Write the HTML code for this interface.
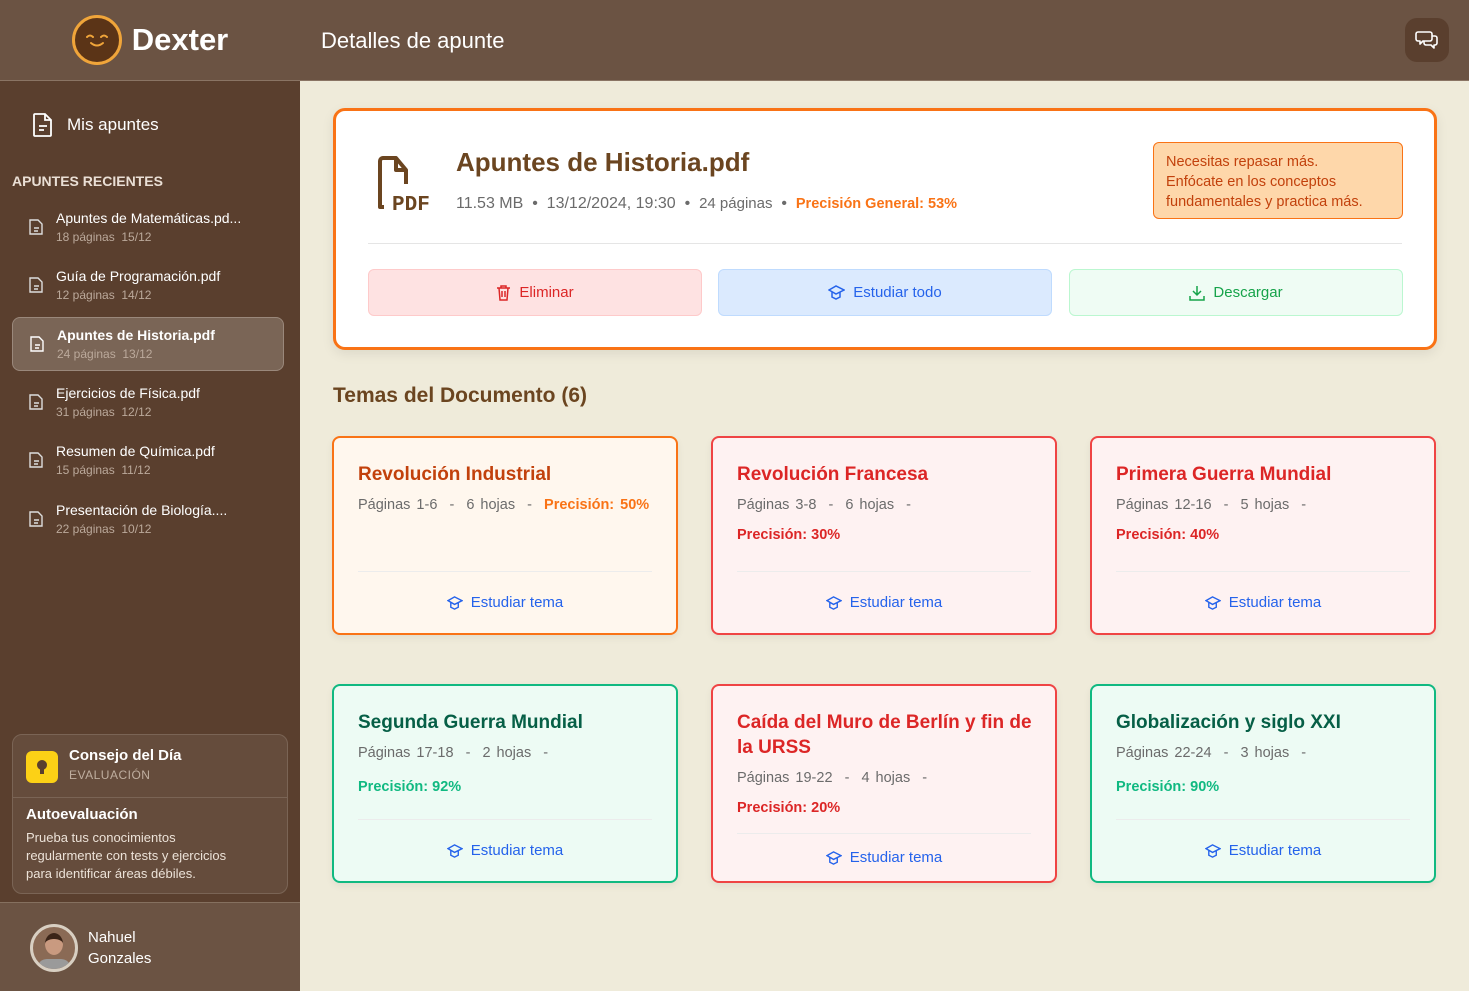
<!DOCTYPE html>
<html><head><meta charset="utf-8"><style>
*{box-sizing:border-box;margin:0;padding:0}
body{width:1469px;height:991px;overflow:hidden;font-family:"Liberation Sans",sans-serif;background:#efebda;position:relative}
.sb{position:absolute;left:0;top:0;width:300px;height:991px;background:#5a3f2e}
.logo{height:81px;background:#6b5343;border-bottom:1px solid #8a7464;display:flex;align-items:center;justify-content:center;gap:10px}
.face{width:50px;height:50px;border-radius:50%;background:#5b3417;border:3px solid #f0a53a;position:relative}
.logo span{color:#fff;font-weight:bold;font-size:31px}
.mis{position:absolute;left:32px;top:112px;color:#fff;font-size:17px;display:flex;align-items:center;gap:13px}
.rec{position:absolute;left:12px;top:173px;color:#eadfd5;font-weight:bold;font-size:14px}
.it{position:absolute;left:12px;width:272px;height:54px;border-radius:8px;display:flex;align-items:center;padding-left:17px;gap:13px;color:#fff}
.it.sel{background:#7a6556;border:1px solid #9a887b}
.it b{display:block;font-weight:normal;font-size:14px}
.it.sel b{font-weight:bold}
.it i{display:block;font-style:normal;font-size:12px;color:#bba99b;margin-top:4px}
.tip{position:absolute;left:12px;top:734px;width:276px;height:160px;border:1px solid #7a6455;border-radius:10px;background:#654c3c}
.bulb{position:absolute;left:13px;top:16px;width:32px;height:32px;border-radius:6px;background:#fcd116}
.user{position:absolute;left:0;top:902px;width:300px;height:89px;background:#6b5343;border-top:1px solid #85705f}
.hdr{position:absolute;left:300px;top:0;right:0;height:81px;background:#6b5343;border-bottom:1px solid #8a7464}
.hdr h1{position:absolute;left:21px;top:28px;font-weight:normal;font-size:22px;color:#fff}
.chat{position:absolute;right:20px;top:18px;width:44px;height:44px;border-radius:12px;background:#5a3f2e;display:flex;align-items:center;justify-content:center}
.main{position:absolute;left:333px;top:108px;width:1104px;height:242px;background:#fff;border:3px solid #f97316;border-radius:12px;box-shadow:0 4px 12px rgba(0,0,0,.08)}
.btn{position:absolute;top:158px;width:334px;height:47px;border-radius:6px;display:flex;align-items:center;justify-content:center;gap:8px;font-size:15px}
.card{position:absolute;width:346px;height:199px;border:2px solid;border-radius:8px;padding:24px 24px 0 24px;box-shadow:0 3px 8px rgba(0,0,0,.06)}
.card h3{font-size:19px;line-height:25px;margin-bottom:10px}
.card .m{font-size:14.5px;color:#6b6b6b;word-spacing:2px}
.card .p{font-weight:bold;font-size:14.5px}
.card .f{position:absolute;left:24px;right:24px;bottom:0;height:62px;border-top:1px solid #ececec;display:flex;align-items:center;justify-content:center;gap:8px;color:#2563eb;font-size:15px}
.o{border-color:#f97316;background:#fff7ee}.o h3{color:#c2410c}.o .p{color:#f97316}
.r{border-color:#ef4444;background:#fef2f2}.r h3{color:#dc2626}.r .p{color:#dc2626}
.g{border-color:#10b981;background:#edfbf4}.g h3{color:#065f46}.g .p{color:#10b981}
</style></head><body>
<div class="sb">
<div class="logo"><div class="face"><svg width="44" height="44" viewBox="0 0 44 44" fill="none" stroke="#f0a53a" stroke-width="2" stroke-linecap="round"><path d="M12 19q3-3 6 0M26 19q3-3 6 0M16 25q6 5 12 0"/></svg></div><span>Dexter</span></div>
<div class="mis"><svg width="22" height="26" viewBox="0 0 22 26" fill="none" stroke="#fff" stroke-width="1.8"><path d="M3 2h10l6 6v15a1 1 0 0 1-1 1H3a1 1 0 0 1-1-1V3a1 1 0 0 1 1-1zM13 2v6h6M7 18h5M7 14h8"/></svg>Mis apuntes</div>
<div class="rec">APUNTES RECIENTES</div>
<div class="it" style="top:200px"><svg width="14" height="17" viewBox="0 0 14 17" fill="none" stroke="#ddd" stroke-width="1.4"><path d="M2 1h7l4 4v10H1V1zM5 12h4M5 9h5"/></svg><div><b>Apuntes de Matemáticas.pd...</b><i>18 páginas &nbsp;15/12</i></div></div>
<div class="it" style="top:258px"><svg width="14" height="17" viewBox="0 0 14 17" fill="none" stroke="#ddd" stroke-width="1.4"><path d="M2 1h7l4 4v10H1V1zM5 12h4M5 9h5"/></svg><div><b>Guía de Programación.pdf</b><i>12 páginas &nbsp;14/12</i></div></div>
<div class="it sel" style="top:317px"><svg width="14" height="17" viewBox="0 0 14 17" fill="none" stroke="#fff" stroke-width="1.4"><path d="M2 1h7l4 4v10H1V1zM5 12h4M5 9h5"/></svg><div><b>Apuntes de Historia.pdf</b><i>24 páginas &nbsp;13/12</i></div></div>
<div class="it" style="top:375px"><svg width="14" height="17" viewBox="0 0 14 17" fill="none" stroke="#ddd" stroke-width="1.4"><path d="M2 1h7l4 4v10H1V1zM5 12h4M5 9h5"/></svg><div><b>Ejercicios de Física.pdf</b><i>31 páginas &nbsp;12/12</i></div></div>
<div class="it" style="top:433px"><svg width="14" height="17" viewBox="0 0 14 17" fill="none" stroke="#ddd" stroke-width="1.4"><path d="M2 1h7l4 4v10H1V1zM5 12h4M5 9h5"/></svg><div><b>Resumen de Química.pdf</b><i>15 páginas &nbsp;11/12</i></div></div>
<div class="it" style="top:492px"><svg width="14" height="17" viewBox="0 0 14 17" fill="none" stroke="#ddd" stroke-width="1.4"><path d="M2 1h7l4 4v10H1V1zM5 12h4M5 9h5"/></svg><div><b>Presentación de Biología....</b><i>22 páginas &nbsp;10/12</i></div></div>
<div class="tip"><div class="bulb"><svg width="32" height="32" viewBox="0 0 32 32"><circle cx="16" cy="14" r="5" fill="#5a3f2e"/><rect x="14" y="18" width="4" height="5" fill="#5a3f2e"/></svg></div>
<div style="position:absolute;left:56px;top:12px;color:#fff;font-weight:bold;font-size:15px">Consejo del Día</div>
<div style="position:absolute;left:56px;top:33px;color:#bfae9f;font-size:12px;letter-spacing:.5px">EVALUACIÓN</div>
<div style="position:absolute;left:0;right:0;top:62px;border-top:1px solid #7a6455"></div>
<div style="position:absolute;left:13px;top:71px;color:#fff;font-weight:bold;font-size:15px">Autoevaluación</div>
<div style="position:absolute;left:13px;top:94px;width:260px;color:#ece2d8;font-size:13px;line-height:18px;white-space:nowrap">Prueba tus conocimientos<br>regularmente con tests y ejercicios<br>para identificar áreas débiles.</div></div>
<div class="user"><div style="position:absolute;left:30px;top:21px;width:48px;height:48px;border-radius:50%;background:#8a6a55;border:3px solid #d8cfc2;overflow:hidden"><div style="position:absolute;left:12px;top:6px;width:18px;height:22px;border-radius:50%;background:#c99a80;border-top:6px solid #3a2418"></div><div style="position:absolute;left:4px;bottom:0;width:34px;height:10px;border-radius:10px 10px 0 0;background:#9a9a9a"></div></div>
<div style="position:absolute;left:88px;top:24px;color:#fff;font-size:15px;line-height:21px">Nahuel<br>Gonzales</div></div>
</div>
<div class="hdr"><h1>Detalles de apunte</h1><div class="chat"><svg width="24" height="22" viewBox="0 0 24 22" fill="none" stroke="#fff" stroke-width="1.6" stroke-linejoin="round"><path d="M3 3h12a2 2 0 0 1 2 2v5a2 2 0 0 1-2 2H8l-3 3v-3H3a2 2 0 0 1-2-2V5a2 2 0 0 1 2-2z"/><path d="M17 7h3a2 2 0 0 1 2 2v5a2 2 0 0 1-2 2h-1v3l-3-3h-5a2 2 0 0 1-2-2v-2"/></svg></div></div>
<div class="main">
<svg style="position:absolute;left:36px;top:44px" width="58" height="58" viewBox="0 0 58 58" fill="none" stroke="#6b4520" stroke-width="4" stroke-linejoin="round"><path d="M12 52H8V6a3 3 0 0 1 3-3h13l10 12v14M24 3v12h10"/><text x="20" y="55" fill="#6b4520" stroke="none" font-family="Liberation Mono" font-weight="bold" font-size="21">PDF</text></svg>
<div style="position:absolute;left:120px;top:36px;color:#6b4520;font-size:26px;font-weight:bold">Apuntes de Historia.pdf</div>
<div style="position:absolute;left:120px;top:84px;font-size:16px;color:#6b6b6b;white-space:nowrap">11.53 MB &nbsp;• &nbsp;13/12/2024, 19:30 &nbsp;• &nbsp;<span style="font-size:15px">24 páginas</span> &nbsp;• &nbsp;<b style="color:#f97316;font-size:14.5px">Precisión General: 53%</b></div>
<div style="position:absolute;left:817px;top:31px;width:250px;height:77px;background:#fed7aa;border:1px solid #f97316;border-radius:6px;padding:9px 12px;color:#c2410c;font-size:14.5px;line-height:20px">Necesitas repasar más.<br>Enfócate en los conceptos<br>fundamentales y practica más.</div>
<div style="position:absolute;left:32px;right:32px;top:132px;border-top:1px solid #e5e5e5"></div>
<div class="btn" style="left:32px;background:#fee2e2;border:1px solid #fecaca;color:#dc2626"><svg width="15" height="17" viewBox="0 0 15 17" fill="none" stroke="#dc2626" stroke-width="1.5"><path d="M1 4h13M5 4V2h5v2M3 4l1 12h7l1-12M6 7v6M9 7v6"/></svg>Eliminar</div>
<div class="btn" style="left:382px;background:#dbeafe;border:1px solid #bfdbfe;color:#2563eb"><svg width="17" height="15" viewBox="0 0 17 15" fill="none" stroke="#2563eb" stroke-width="1.5"><path d="M1 5l7-4 8 4-8 4zM4 7v5l4 2 4-2V7"/></svg>Estudiar todo</div>
<div class="btn" style="left:733px;background:#effcf4;border:1px solid #bbf7d0;color:#16a34a"><svg width="16" height="16" viewBox="0 0 16 16" fill="none" stroke="#16a34a" stroke-width="1.5"><path d="M8 1v9M4 6l4 4 4-4M1 11v4h14v-4"/></svg>Descargar</div>
</div>
<div style="position:absolute;left:333px;top:384px;font-size:21px;font-weight:bold;color:#6b4520">Temas del Documento (6)</div>

<div class="card o" style="left:332px;top:436px"><h3>Revolución Industrial</h3><div class="m">Páginas 1-6 &nbsp;- &nbsp;6 hojas &nbsp;- &nbsp;<span class="p">Precisión: 50%</span></div><div class="f"><svg width="16" height="14" viewBox="0 0 17 15" fill="none" stroke="#2563eb" stroke-width="1.5"><path d="M1 5l7-4 8 4-8 4zM4 7v5l4 2 4-2V7"/></svg>Estudiar tema</div></div>
<div class="card r" style="left:711px;top:436px"><h3>Revolución Francesa</h3><div class="m">Páginas 3-8 &nbsp;- &nbsp;6 hojas &nbsp;-</div><div class="p" style="margin-top:14px">Precisión: 30%</div><div class="f"><svg width="16" height="14" viewBox="0 0 17 15" fill="none" stroke="#2563eb" stroke-width="1.5"><path d="M1 5l7-4 8 4-8 4zM4 7v5l4 2 4-2V7"/></svg>Estudiar tema</div></div>
<div class="card r" style="left:1090px;top:436px"><h3>Primera Guerra Mundial</h3><div class="m">Páginas 12-16 &nbsp;- &nbsp;5 hojas &nbsp;-</div><div class="p" style="margin-top:14px">Precisión: 40%</div><div class="f"><svg width="16" height="14" viewBox="0 0 17 15" fill="none" stroke="#2563eb" stroke-width="1.5"><path d="M1 5l7-4 8 4-8 4zM4 7v5l4 2 4-2V7"/></svg>Estudiar tema</div></div>
<div class="card g" style="left:332px;top:684px"><h3>Segunda Guerra Mundial</h3><div class="m">Páginas 17-18 &nbsp;- &nbsp;2 hojas &nbsp;-</div><div class="p" style="margin-top:18px">Precisión: 92%</div><div class="f"><svg width="16" height="14" viewBox="0 0 17 15" fill="none" stroke="#2563eb" stroke-width="1.5"><path d="M1 5l7-4 8 4-8 4zM4 7v5l4 2 4-2V7"/></svg>Estudiar tema</div></div>
<div class="card r" style="left:711px;top:684px"><h3 style="white-space:nowrap">Caída del Muro de Berlín y fin de<br>la URSS</h3><div class="m">Páginas 19-22 &nbsp;- &nbsp;4 hojas &nbsp;-</div><div class="p" style="margin-top:14px">Precisión: 20%</div><div class="f" style="height:48px">
<svg width="16" height="14" viewBox="0 0 17 15" fill="none" stroke="#2563eb" stroke-width="1.5"><path d="M1 5l7-4 8 4-8 4zM4 7v5l4 2 4-2V7"/></svg>Estudiar tema</div></div>
<div class="card g" style="left:1090px;top:684px"><h3>Globalización y siglo XXI</h3><div class="m">Páginas 22-24 &nbsp;- &nbsp;3 hojas &nbsp;-</div><div class="p" style="margin-top:18px">Precisión: 90%</div><div class="f"><svg width="16" height="14" viewBox="0 0 17 15" fill="none" stroke="#2563eb" stroke-width="1.5"><path d="M1 5l7-4 8 4-8 4zM4 7v5l4 2 4-2V7"/></svg>Estudiar tema</div></div>
</body></html>
